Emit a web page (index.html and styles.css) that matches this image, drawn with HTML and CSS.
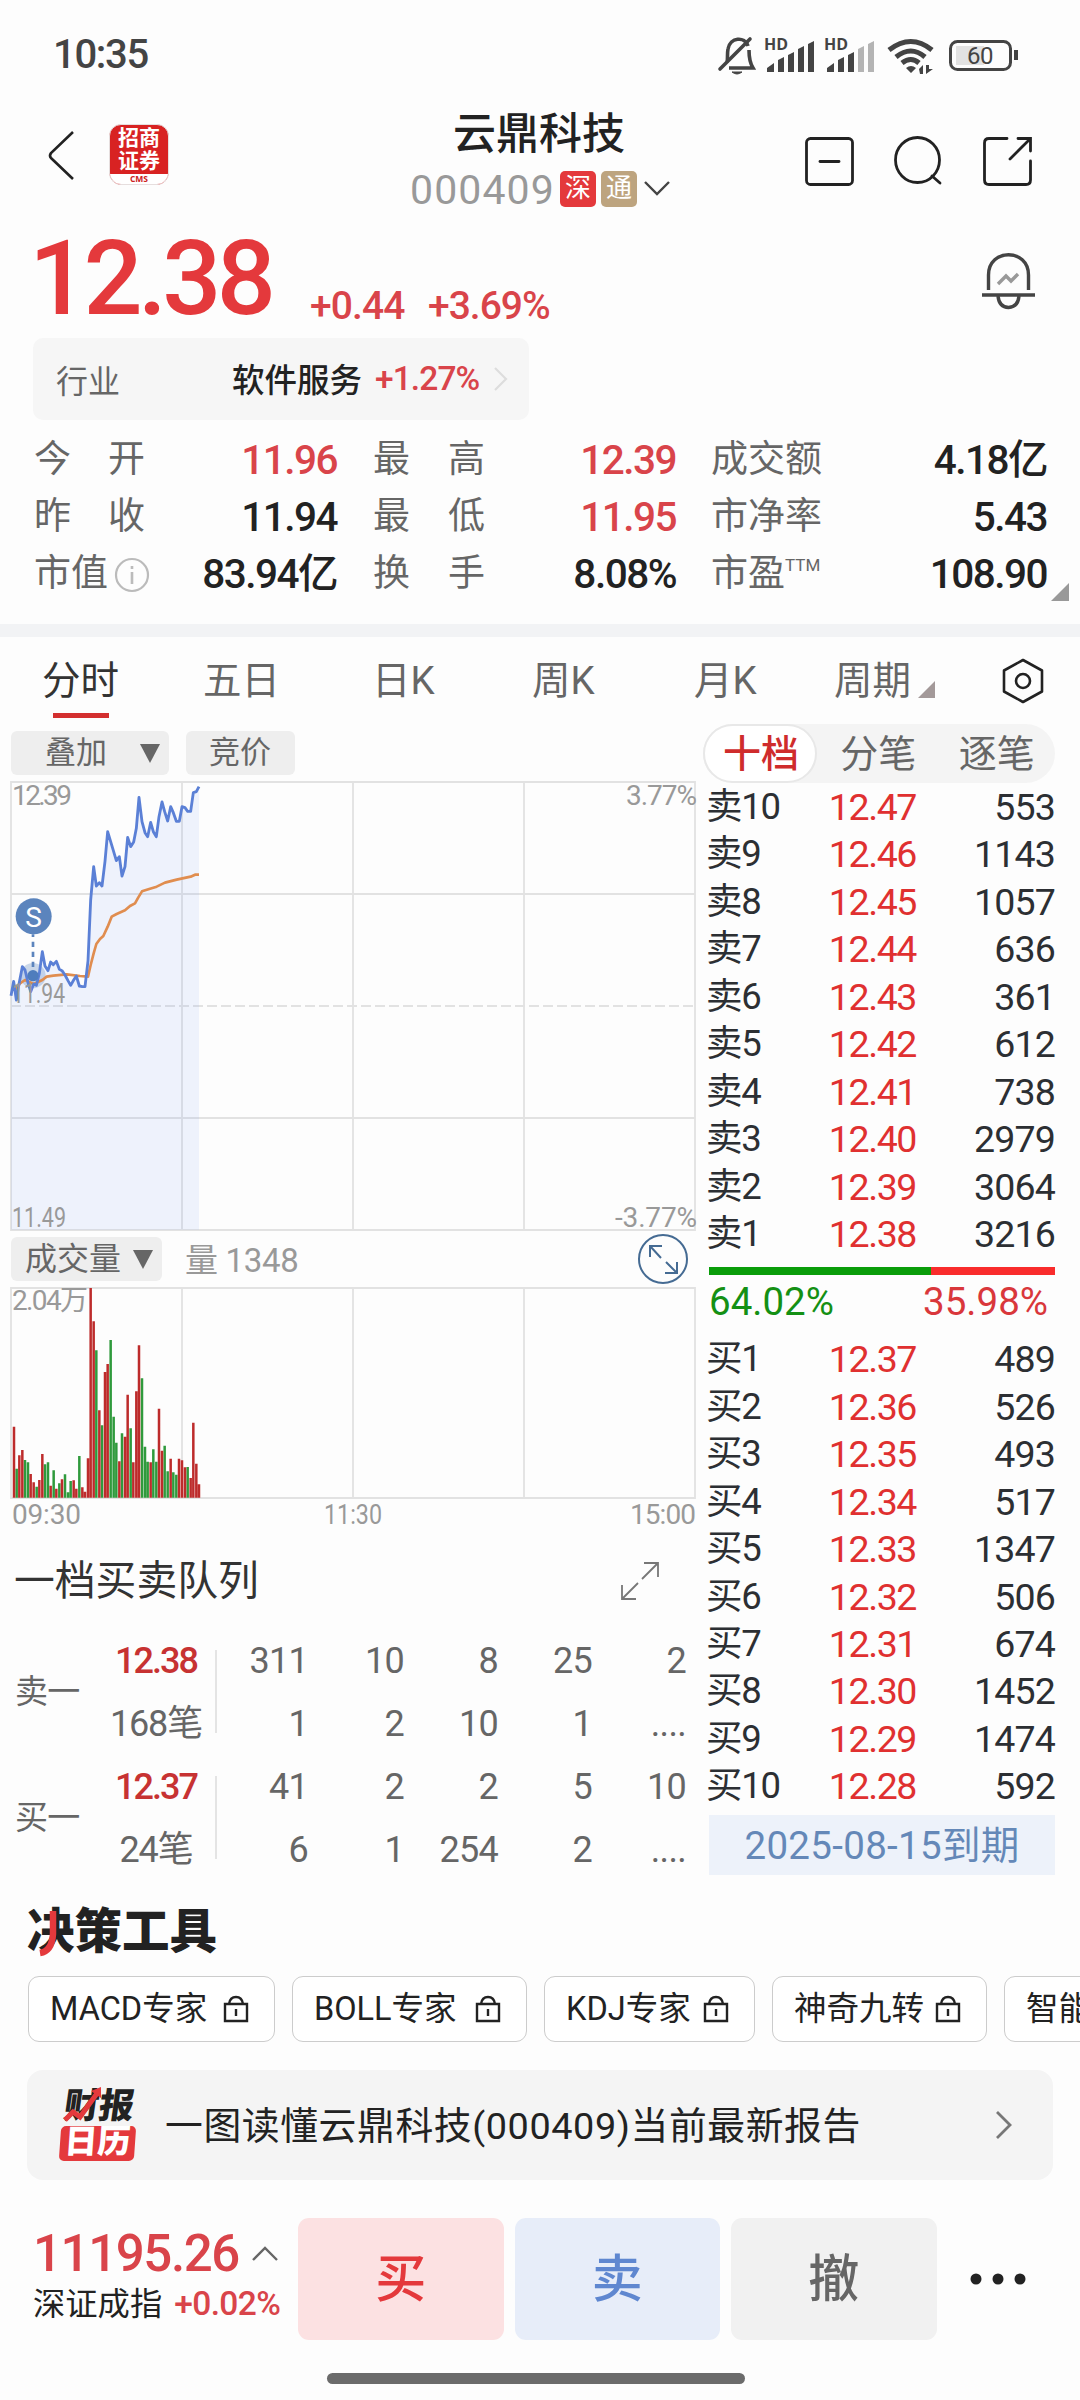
FILE: index.html
```html
<!DOCTYPE html>
<html lang="zh-CN">
<head>
<meta charset="utf-8">
<title>云鼎科技 000409</title>
<link rel="stylesheet" href="styles.css">
</head>
<body>
<div class="screen">
  <div class="status">
    <span class="clock">10:35</span>
    <svg class="status-icons" width="306" height="46" viewBox="714 32 306 46" fill="none" stroke="#444">
      <g stroke-width="3.4">
        <path d="M727 62c1-3 0-8 1-13 2-12 17-13 20-3M749 50c0 8 1 13 4 18H729" stroke-width="3.6"/>
        <path d="M720 69L750 39" stroke-linecap="round" stroke-width="3.6"/>
        <path d="M732 72h10q-5 4-10 0z" fill="#444" stroke-width="1"/>
      </g>
      <g fill="#444" stroke="none">
        <text class="hd" x="764" y="50">HD</text><text class="hd" x="824" y="50">HD</text>
        <path d="M767 72v-4l7-5v9zM778 72V60l6-3v15zM788 72V55l6-3v20zM798 72V49l6-3v26zM808 72V44l6-3v31z"/>
        <path d="M827 72v-4l7-5v9zM838 72V60l6-3v15zM848 72V55l6-3v20z"/>
        <path d="M858 72V49l6-3v26zM868 72V44l6-3v31z" fill="#b4b4b4"/>
        <path d="M911 73l-5-5q5-4 10 0zM919 69l4-4v9h-3zM926 74v-9h3v4h4z"/>
      </g>
      <g stroke-width="5"><path d="M889 50q22-17 43 0M896 57q15-12 29 0M902 63q9-7 17 0"/></g>
      <rect x="950.500" y="41.500" width="60" height="28" rx="7" stroke-width="3"/>
      <path d="M956 46h28v19h-28z" fill="#e2e2e2" stroke="none"/>
      <path d="M1016 50v10" stroke-width="4"/>
      <text class="batt" x="967" y="64">60</text>
    </svg>
  </div>

  <header class="header">
    <svg class="back" width="30" height="54" viewBox="0 0 30 54"><path d="M27 4L5 25q-2 3 0 5l22 21"/></svg>
    <div class="broker"><span>招商<br>证券</span><b>CMS</b></div>
    <div class="name-block">
      <h1>云鼎科技</h1>
      <div class="code-row">
        <span class="code">000409</span><i class="badge sz">深</i><i class="badge hk">通</i>
        <svg width="26" height="16" viewBox="0 0 26 16"><path d="M1 1l12 12L25 1" fill="none" stroke="#444" stroke-width="2.400"/></svg>
      </div>
    </div>
    <svg class="tools" width="230" height="52" viewBox="804 135 230 52" fill="none" stroke="#222" stroke-width="2.800" stroke-linecap="round">
      <rect x="806.500" y="138.500" width="46" height="46" rx="4"/><path d="M820 161.500h19"/>
      <ellipse cx="917.500" cy="160" rx="22" ry="22.500"/><path d="M932 176l8 7"/>
      <path d="M1007 138.500H989q-4.500 0-4.500 4.500v37q0 4.500 4.500 4.500h37q4.500 0 4.500-4.500v-19M1018 138.500h12.500V151M1030 139l-20 20"/>
    </svg>
  </header>

  <section class="quote">
    <span class="price">12.38</span>
    <span class="delta">+0.44</span><span class="delta pct">+3.69%</span>
    <svg class="alert" width="58" height="60" viewBox="980 251 58 60" fill="none" stroke="#444" stroke-width="3.400">
      <path d="M988.500 290v-15c0-27 40-27 40 0v15M982 295h53" stroke-linecap="butt"/><path d="M998 296q1 11 10.500 11.500Q1018 307 1019 296"/><path d="M998 284l8-8 5 5 7-7" stroke="#999"/>
    </svg>
  </section>

  <div class="industry">
    <span class="ind-label">行业</span><span class="ind-name">软件服务</span><span class="ind-pct">+1.27%</span>
    <svg width="14" height="26" viewBox="0 0 14 26"><path d="M1 2l11 11L1 24" fill="none" stroke="#ddd" stroke-width="2.200"/></svg>
  </div>

  <section class="stats">
    <span class="k"><i>今</i><i>开</i></span><span class="v up">11.96</span>
    <span class="k"><i>最</i><i>高</i></span><span class="v up">12.39</span>
    <span class="k">成交额</span><span class="v">4.18亿</span>
    <span class="k"><i>昨</i><i>收</i></span><span class="v">11.94</span>
    <span class="k"><i>最</i><i>低</i></span><span class="v up">11.95</span>
    <span class="k">市净率</span><span class="v">5.43</span>
    <span class="k info">市值<svg width="36" height="36" viewBox="0 0 36 36"><circle cx="18" cy="18" r="16" fill="none" stroke="#bbb" stroke-width="2.200"/><path d="M18 15v12M18 9v3" stroke="#bbb" stroke-width="2.600"/></svg></span><span class="v">83.94亿</span>
    <span class="k"><i>换</i><i>手</i></span><span class="v">8.08%</span>
    <span class="k pe">市盈<small>TTM</small></span><span class="v">108.90</span>
    <svg class="more" width="20" height="20" viewBox="0 0 20 20"><path d="M19 1v18H1z" fill="#999"/></svg>
  </section>

  <div class="band"></div>

  <nav class="periods">
    <span class="tab on">分时</span><span class="tab">五日</span><span class="tab">日K</span><span class="tab">周K</span><span class="tab">月K</span>
    <span class="tab cyc">周期<svg width="17" height="17" viewBox="0 0 17 17"><path d="M17 0v17H0z" fill="#a39999"/></svg></span>
    <svg class="gear" width="44" height="48" viewBox="0 0 44 48" fill="none" stroke="#222" stroke-width="2.600" stroke-linejoin="round"><path d="M22 3l19 10.500v21L22 45 3 34.500v-21z"/><circle cx="22" cy="24" r="7"/></svg>
  </nav>

  <div class="market">
    <div class="left">
      <div class="btns">
        <span class="btn overlay">叠加<i class="caret"></i></span><span class="btn auction">竞价</span>
      </div>
      <svg class="chart" width="700" height="452" viewBox="0 780 700 452">
        <g class="grid"><path d="M11 782H695V1230H11zM11 894H695M11 1118H695M182 782V1230M353 782V1230M524 782V1230"/><path d="M11 1006H695" stroke-dasharray="10 4"/></g>
        <g transform="translate(0 760) scale(.33333)">
          <path class="area" d="M33 707 41 664 49 720 57 672 67 620 75 630 84 668 92 695 101 672 109 676 118 640 127 575 135 618 144 632 152 606 160 614 169 604 178 628 186 632 195 645 204 662 212 676 221 660 229 648 238 678 247 680 255 680 264 603 272 420 281 320 289 378 298 368 306 378 315 304 323 215 332 245 341 275 349 302 358 290 366 348 375 320 383 232 392 260 401 246 409 205 417 112 426 185 435 218 443 230 452 187 460 215 469 230 477 170 486 126 494 155 503 183 512 140 520 158 529 184 538 184 546 140 555 143 563 154 572 154 580 98 589 95 597 80V1409H33z"/>
          <circle cx="99" cy="647" r="38" fill="#5b84bd" opacity=".3"/>
          <path class="avg" d="M45 690 60 670 75 660 101 672 127 660 140 650 160 647 200 643 240 648 264 650 272 615 281 580 289 552 300 537 310 528 323 500 335 470 350 462 375 451 390 438 405 430 415 412 426 394 450 386 470 380 495 368 530 359 572 350 585 344 597 344"/>
          <path class="line" d="M33 707 41 664 49 720 57 672 67 620 75 630 84 668 92 695 101 672 109 676 118 640 127 575 135 618 144 632 152 606 160 614 169 604 178 628 186 632 195 645 204 662 212 676 221 660 229 648 238 678 247 680 255 680 264 603 272 420 281 320 289 378 298 368 306 378 315 304 323 215 332 245 341 275 349 302 358 290 366 348 375 320 383 232 392 260 401 246 409 205 417 112 426 185 435 218 443 230 452 187 460 215 469 230 477 170 486 126 494 155 503 183 512 140 520 158 529 184 538 184 546 140 555 143 563 154 572 154 580 98 589 95 597 80"/>
          <circle cx="99" cy="647" r="17" fill="#4f7dbd"/><circle cx="101" cy="469" r="54" fill="#5b84bd"/>
          <path d="M99 523v108" stroke="#5b84bd" stroke-width="8" stroke-dasharray="16 14" stroke-dashoffset="8"/>
        </g>
        <text class="smark" x="33.500" y="926.500" text-anchor="middle">S</text>
        <g class="axis"><text x="12" y="805" textLength="60">12.39</text><text x="626" y="805" textLength="71">3.77%</text><text x="12" y="1002.500" textLength="53" lengthAdjust="spacingAndGlyphs">11.94</text><text x="12" y="1226.500" textLength="54" lengthAdjust="spacingAndGlyphs">11.49</text><text x="615" y="1226.500" textLength="82">-3.77%</text></g>
      </svg>
      <div class="btns vol">
        <span class="btn volume">成交量<i class="caret"></i></span><span class="volnum">量 1348</span>
        <svg class="full" width="52" height="52" viewBox="0 0 52 52" fill="none" stroke="#456b93" stroke-width="2"><circle cx="26" cy="26" r="24"/><path d="M13 24V13h12M13 13l11 12M29 29l11 11M40 29v11H28"/></svg>
      </div>
      <svg class="chart" width="700" height="244" viewBox="0 1286 700 244">
        <path class="grid" d="M11 1288H695V1498H11zM182 1288V1498M353 1288V1498M524 1288V1498"/>
        <g transform="translate(0 1200) scale(.33333)" fill="none" stroke-width="7.500">
          <path stroke="#2f9a3c" d="M50 893V806M75 893V780M84 893V787M110 893V860M135 893V793M144 893V787M161 893V811M178 893V850M195 893V823M204 893V877M212 893V843M238 893V768M289 893V451M306 893V676M332 893V420M341 893V650M349 893V728M366 893V700M392 893V685M426 893V535M435 893V740M443 893V785M460 893V748M469 893V785M494 893V737M503 893V814M520 893V817M529 893V824M563 893V801"/>
          <path stroke="#bd2b2b" d="M42 893V680M58 893V766M67 893V750M92 893V822M101 893V847M118 893V840M127 893V762M152 893V857M169 893V866M186 893V838M221 893V841M229 893V866M247 893V862M255 893V875M264 893V775M272 893V264M281 893V364M298 893V631M315 893V516M323 893V492M358 893V784M375 893V710M383 893V584M400 893V787M409 893V574M417 893V436M452 893V787M477 893V626M486 893V752M512 893V776M537 893V776M546 893V781M555 893V802M572 893V834M580 893V668M589 893V791M597 893V853"/>
        </g>
        <g class="axis"><text x="12" y="1310" textLength="76">2.04万</text><text x="12" y="1524" textLength="69">09:30</text><text x="324" y="1524" textLength="58" lengthAdjust="spacingAndGlyphs">11:30</text><text x="630" y="1524" textLength="66">15:00</text></g>
      </svg>

      <div class="queue-head"><h2>一档买卖队列</h2><svg width="40" height="40" viewBox="0 0 40 40" fill="none" stroke="#777" stroke-width="1.800"><path d="M24 2h14v14M38 2L22 18M16 38H2V24M2 38l16-16"/></svg></div>
      <div class="queue">
        <span class="side">卖一</span><div class="sum"><b>12.38</b><span>168笔</span></div>
        <div class="cells"><span>311</span><span>10</span><span>8</span><span>25</span><span>2</span><span>1</span><span>2</span><span>10</span><span>1</span><span>....</span></div>
      </div>
      <div class="queue">
        <span class="side">买一</span><div class="sum"><b>12.37</b><span>24笔</span></div>
        <div class="cells"><span>41</span><span>2</span><span>2</span><span>5</span><span>10</span><span>6</span><span>1</span><span>254</span><span>2</span><span>....</span></div>
      </div>
    </div>

    <div class="right">
      <div class="seg"><span class="on">十档</span><span>分笔</span><span>逐笔</span></div>
      <div class="book">
        <div><span>卖10</span><b>12.47</b><em>553</em></div>
        <div><span>卖9</span><b>12.46</b><em>1143</em></div>
        <div><span>卖8</span><b>12.45</b><em>1057</em></div>
        <div><span>卖7</span><b>12.44</b><em>636</em></div>
        <div><span>卖6</span><b>12.43</b><em>361</em></div>
        <div><span>卖5</span><b>12.42</b><em>612</em></div>
        <div><span>卖4</span><b>12.41</b><em>738</em></div>
        <div><span>卖3</span><b>12.40</b><em>2979</em></div>
        <div><span>卖2</span><b>12.39</b><em>3064</em></div>
        <div><span>卖1</span><b>12.38</b><em>3216</em></div>
      </div>
      <div class="ratio"><i style="width:64.02%"></i></div>
      <div class="ratio-num"><span>64.02%</span><span>35.98%</span></div>
      <div class="book">
        <div><span>买1</span><b>12.37</b><em>489</em></div>
        <div><span>买2</span><b>12.36</b><em>526</em></div>
        <div><span>买3</span><b>12.35</b><em>493</em></div>
        <div><span>买4</span><b>12.34</b><em>517</em></div>
        <div><span>买5</span><b>12.33</b><em>1347</em></div>
        <div><span>买6</span><b>12.32</b><em>506</em></div>
        <div><span>买7</span><b>12.31</b><em>674</em></div>
        <div><span>买8</span><b>12.30</b><em>1452</em></div>
        <div><span>买9</span><b>12.29</b><em>1474</em></div>
        <div><span>买10</span><b>12.28</b><em>592</em></div>
      </div>
      <div class="expire">2025-08-15到期</div>
    </div>
  </div>

  <h2 class="tools-title">决策工具<svg width="22" height="48" viewBox="0 0 22 48"><path d="M15 1V24Q14 41 2 43" fill="none" stroke="#e4393c" stroke-width="6.500"/></svg></h2>
  <div class="chips">
    <span class="c1">MACD专家<svg class="lock" viewBox="0 0 26 28"><path d="M2 9h22v17H2zM6 9q1-7 7-7t7 7M13 14v7"/></svg></span>
    <span class="c2">BOLL专家<svg class="lock" viewBox="0 0 26 28"><path d="M2 9h22v17H2zM6 9q1-7 7-7t7 7M13 14v7"/></svg></span>
    <span class="c3">KDJ专家<svg class="lock" viewBox="0 0 26 28"><path d="M2 9h22v17H2zM6 9q1-7 7-7t7 7M13 14v7"/></svg></span>
    <span class="c4">神奇九转<svg class="lock" viewBox="0 0 26 28"><path d="M2 9h22v17H2zM6 9q1-7 7-7t7 7M13 14v7"/></svg></span>
    <span class="c5">智能</span>
  </div>

  <div class="banner">
    <div class="cal"><b>财报</b><i>日历</i><svg width="42" height="36" viewBox="0 0 42 36"><path d="M2 33l8-8 7 5L35 5" fill="none" stroke="#e4393c" stroke-width="5"/><path d="M28 4l10-4v11z" fill="#e4393c"/></svg></div>
    <span class="banner-text">一图读懂云鼎科技(000409)当前最新报告</span>
    <svg width="18" height="30" viewBox="0 0 18 30"><path d="M2 2l13 13L2 28" fill="none" stroke="#777" stroke-width="2.800"/></svg>
  </div>

  <footer class="dock">
    <div class="index">
      <div class="idx-val">11195.26<svg width="26" height="16" viewBox="0 0 26 16"><path d="M1 14L13 2l12 12" fill="none" stroke="#666" stroke-width="2.400"/></svg></div>
      <div class="idx-name">深证成指<span>+0.02%</span></div>
    </div>
    <span class="act buy">买</span><span class="act sell">卖</span><span class="act cancel">撤</span>
    <svg class="dots" width="56" height="12" viewBox="0 0 56 12" fill="#222"><circle cx="6" cy="6" r="5.500"/><circle cx="28" cy="6" r="5.500"/><circle cx="50" cy="6" r="5.500"/></svg>
  </footer>
  <div class="home"></div>
</div>
</body>
</html>
```

FILE: styles.css
```css
* { box-sizing: border-box; margin: 0; padding: 0; }
body { background: #fdfdfd; }
i, em { font-style: normal; }
svg { display: block; flex: none; }
.screen { width: 1080px; height: 2400px; overflow: hidden; display: flex; flex-direction: column; background: #fdfdfd; color: #222; font-family: Roboto, "Noto Sans CJK SC", sans-serif; white-space: nowrap; }

/* status bar */
.status { flex: none; height: 112px; padding: 32px 60px 0 53px; display: flex; justify-content: space-between; }
.clock { font-size: 40px; line-height: 46px; color: #444; letter-spacing: -1.3px; font-weight: 500; }
.hd { font: 700 16px "Open Sans", sans-serif; }
.batt { font: 400 24px Roboto, sans-serif; fill: #444; stroke: none; letter-spacing: -.5px; }

/* header */
.header { flex: none; height: 108px; padding-left: 46px; display: flex; align-items: flex-start; }
.back { margin-top: 16px; fill: none; stroke: #222; stroke-width: 2.6; }
.broker { margin: 12px 0 0 33px; width: 60px; height: 61px; border-radius: 12px; overflow: hidden; background: #d82222; border: 1px solid #e6dede; color: #fff; text-align: center; font-weight: 700; display: flex; flex-direction: column; justify-content: space-between; }
.broker span { font-size: 21px; line-height: 22.5px; padding-top: 2px; }
.broker b { background: #fff; color: #c22; font: 700 8.5px/10px "Open Sans", sans-serif; height: 10px; }
.name-block { margin-left: 237px; width: 264px; }
.name-block h1 { font-size: 43px; line-height: 45px; font-weight: 500; text-align: center; width: 266px; }
.code-row { display: flex; align-items: center; height: 36px; margin: 14px 0 0 4px; }
.code { font-size: 41px; line-height: 36px; color: #999; letter-spacing: 1.1px; width: 150px; font-weight: 400; padding-top: 2px; }
.badge { width: 36px; height: 36px; border-radius: 5px; color: #fff; font-size: 26px; line-height: 35px; text-align: center; margin-right: 5px; }
.sz { background: #e4393c; }
.hk { background: #bda47f; }
.code-row svg { margin-left: 2px; }
.tools { margin: 23px 0 0 134px; }

/* quote */
.quote { flex: none; height: 118px; padding-left: 29px; display: flex; align-items: flex-start; color: #e4393c; }
.price { font-size: 104px; line-height: 118px; font-weight: 500; letter-spacing: -4.6px; width: 281px; }
.delta { font-size: 39px; line-height: 42px; margin-top: 65px; width: 118px; color: #d9444a; font-weight: 500; letter-spacing: -.9px; }
.pct { width: 125px; letter-spacing: -1px; }
.alert { margin: 31px 0 0 427px; }

.industry { flex: none; margin-left: 33px; width: 496px; height: 82px; border-radius: 10px; background: #f6f6f6; display: flex; align-items: center; padding: 0 0 1px 23px; }
.ind-label { font-size: 32px; color: #666; width: 176px; }
.ind-name { font-size: 32.5px; font-weight: 500; width: 143px; margin-top: -3px; }
.ind-pct { font-size: 33.5px; font-weight: 500; color: #d9444a; width: 119px; letter-spacing: -.9px; }

/* key figures */
.stats { flex: none; position: relative; height: 204px; padding-top: 11px; display: grid; grid-template-columns: 111px 192px 36px 112px 191px 35px 112px 224px; grid-auto-rows: 57px; padding-left: 34px; align-content: start; }
.stats .k { font-size: 37px; line-height: 57px; color: #666; display: flex; justify-content: space-between; }
.stats .v { font-size: 40.5px; line-height: 58px; font-weight: 500; text-align: right; letter-spacing: -1.5px; }
.stats .k:nth-child(6n+3) { grid-column: 4; }
.stats .k:nth-child(6n+5) { grid-column: 7; }
.stats .up { color: #d9444a; }
.stats .info, .stats .pe { justify-content: flex-start; }
.info { align-items: center; }
.info svg { margin: 2px 0 0 6px; }
.pe small { font-size: 17px; line-height: 40px; }
.more { position: absolute; right: 10px; top: 162px; }
.band { flex: none; height: 13px; background: #f2f3f5; }

/* period tabs */
.periods { flex: none; height: 87px; display: flex; padding-left: 42px; }
.tab { font-size: 38.5px; line-height: 88px; color: #666; width: 161px; }
.tab:nth-child(2) { width: 169px; }
.tab:nth-child(3) { width: 160px; }
.tab:nth-child(4) { width: 162px; }
.tab:nth-child(5) { width: 140px; }
.tab.on { color: #333; position: relative; }
.tab.on::after { content: ""; position: absolute; left: 11px; top: 76px; width: 56px; height: 5px; background: #d32f2f; }
.tab.cyc { display: flex; width: 167px; }
.cyc svg { margin: 44px 0 0 7px; }
.gear { margin-top: 20px; }

.market { flex: none; display: flex; height: 1161px; }
.left { width: 702px; }
.btns { height: 56px; padding: 7px 0 0 11px; display: flex; }
.btn { height: 44px; border-radius: 6px; background: #eee; color: #666; font-size: 31px; line-height: 44px; display: flex; align-items: center; }
.overlay { width: 158px; padding-left: 34px; gap: 33px; margin-right: 17px; }
.auction { width: 109px; padding-left: 23px; }
.caret { border: 10px solid transparent; border-top: 19px solid #666; border-bottom: 0; }
.chart { overflow: visible; }
.grid { fill: none; stroke: #e2e2e2; stroke-width: 1.8; }
.area { fill: #6a92f5; opacity: .1; }
.line { fill: none; stroke: #5b80d6; stroke-width: 8.5; stroke-linejoin: round; }
.avg { fill: none; stroke: #e08d4f; stroke-width: 8; stroke-linejoin: round; }
.smark { font-size: 28px; fill: #fff; }
.axis { font-size: 28px; fill: #999; }
.vol { height: 54px; padding-top: 5px; }
.volume { width: 151px; padding-left: 14px; gap: 12px; font-size: 32px; line-height: 46px; }
.volnum { font-size: 33px; line-height: 47px; color: #999; margin-left: 23px; width: 452px; letter-spacing: -.3px; }
.full { margin-top: -4px; }

/* first level queue */
.queue-head { height: 100px; padding: 31px 42px 0 14px; display: flex; justify-content: space-between; }
.queue-head h2 { font-size: 40.8px; line-height: 40px; font-weight: 400; color: #333; }
.queue { height: 126px; display: flex; font-size: 36px; color: #666; letter-spacing: -.7px; }
.side { width: 95px; padding-left: 15px; font-size: 33px; line-height: 124px; }
.sum { width: 122px; display: flex; flex-direction: column; text-align: center; line-height: 63px; position: relative; letter-spacing: -1.2px; }
.sum::after { content: ""; position: absolute; right: 0; top: 20px; height: 83px; width: 2px; background: #e4e4e4; }
.sum b { font-weight: 500; color: #c73232; letter-spacing: -2px; }
.cells { display: grid; grid-template-columns: 91px 96px 94px 94px 94px; line-height: 63px; text-align: right; }

/* order book */
.right { width: 378px; padding-left: 7px; }
.seg { margin-left: -6px; width: 352px; height: 59px; border-radius: 30px; background: #f4f4f4; color: #666; font-size: 38px; line-height: 60px; display: flex; }
.seg span { width: 119px; padding-left: 22px; }
.seg .on { width: 115px; border-radius: 30px; background: #fff; border: 2px solid #e8e8e8; color: #cf2c2c; line-height: 56px; padding-left: 18px; font-weight: 500; margin-right: 1px; }
.book { font-size: 37.5px; letter-spacing: -.8px; color: #2c2f33; }
.book div { height: 47.45px; line-height: 48.4px; display: grid; grid-template-columns: 100px 107px 139px; }
.book span { letter-spacing: -1.2px; font-size: 36.5px; margin-left: -3px; }
.book b { font-weight: 400; color: #e03030; text-align: right; letter-spacing: -1.4px; }
.book em { text-align: right; }
.ratio { margin: 10px 0 0; height: 8px; width: 346px; background: #f92c2c; }
.ratio i { display: block; height: 8px; background: #0a9d0a; }
.ratio-num { display: flex; justify-content: space-between; width: 339px; height: 60px; line-height: 54px; font-size: 38.5px; color: #d9373b; letter-spacing: 0; }
.ratio-num span:first-child { color: #149014; }
.expire { margin: 5px 0 0; width: 346px; height: 60px; background: #edf2fa; color: #6488b8; font-size: 38.5px; line-height: 61px; text-align: center; letter-spacing: .3px; }

/* tools */
.tools-title { flex: none; position: relative; height: 91px; padding: 24px 0 0 27px; font-size: 47.5px; line-height: 47px; font-weight: 900; }
.tools-title svg { position: absolute; left: 38px; top: 25px; }
.chips { flex: none; display: flex; gap: 17px; padding-left: 28px; height: 94px; }
.chips > span { flex: none; height: 66px; border: 1.5px solid #ccc; border-radius: 11px; background: #fff; font-size: 32.5px; line-height: 63px; padding: 0 25px 0 21px; display: flex; align-items: center; justify-content: space-between; }
.c1 { width: 247px; } .c2 { width: 235px; } .c3 { width: 211px; } .c4 { width: 215px; } .c5 { width: 215px; }
.lock { width: 26px; height: 28px; fill: none; stroke: #222; stroke-width: 2.4; }

.banner { flex: none; margin: 0 27px; height: 110px; border-radius: 16px; background: #f4f4f4; display: flex; align-items: center; padding-left: 33px; }
.cal { position: relative; width: 105px; height: 74px; }
.cal b { display: block; font-size: 35px; line-height: 37px; font-weight: 900; transform: skewX(-8deg); transform-origin: left; width: 76px; padding-left: 4px; }
.cal i { display: block; margin-top: 1px; width: 75px; height: 35px; border-radius: 5px; background: #e4393c; color: #fff; font-size: 33px; line-height: 32px; font-weight: 900; text-align: center; transform: skewX(-4deg); }
.cal svg { position: absolute; left: 3px; top: -1px; }
.banner-text { font-size: 37.8px; width: 830px; letter-spacing: .6px; margin-top: -5px; }

/* dock */
.dock { flex: none; height: 193px; padding-top: 38px; display: flex; gap: 11px; padding-left: 33px; }
.index { width: 254px; color: #d9444a; }
.idx-val { display: flex; align-items: center; gap: 13px; font-size: 51px; line-height: 60px; font-weight: 500; letter-spacing: -1.4px; margin-top: 6px; }
.idx-name { font-size: 32.3px; line-height: 39px; color: #222; }
.idx-name span { color: #d9444a; font-weight: 500; margin-left: 12px; font-size: 33.5px; letter-spacing: -.6px; }
.act { width: 205.5px; height: 122px; border-radius: 11px; text-align: center; font-size: 51px; line-height: 124px; font-weight: 500; }
.buy { background: #fce1e2; color: #e4393c; }
.sell { background: #e7edf9; color: #5f87d0; }
.cancel { background: #f1f1f1; color: #666; }
.dots { margin: 55px 0 0 22px; }
.home { flex: none; margin-left: 327px; width: 418px; height: 11px; border-radius: 6px; background: #6b6b6b; }
```
